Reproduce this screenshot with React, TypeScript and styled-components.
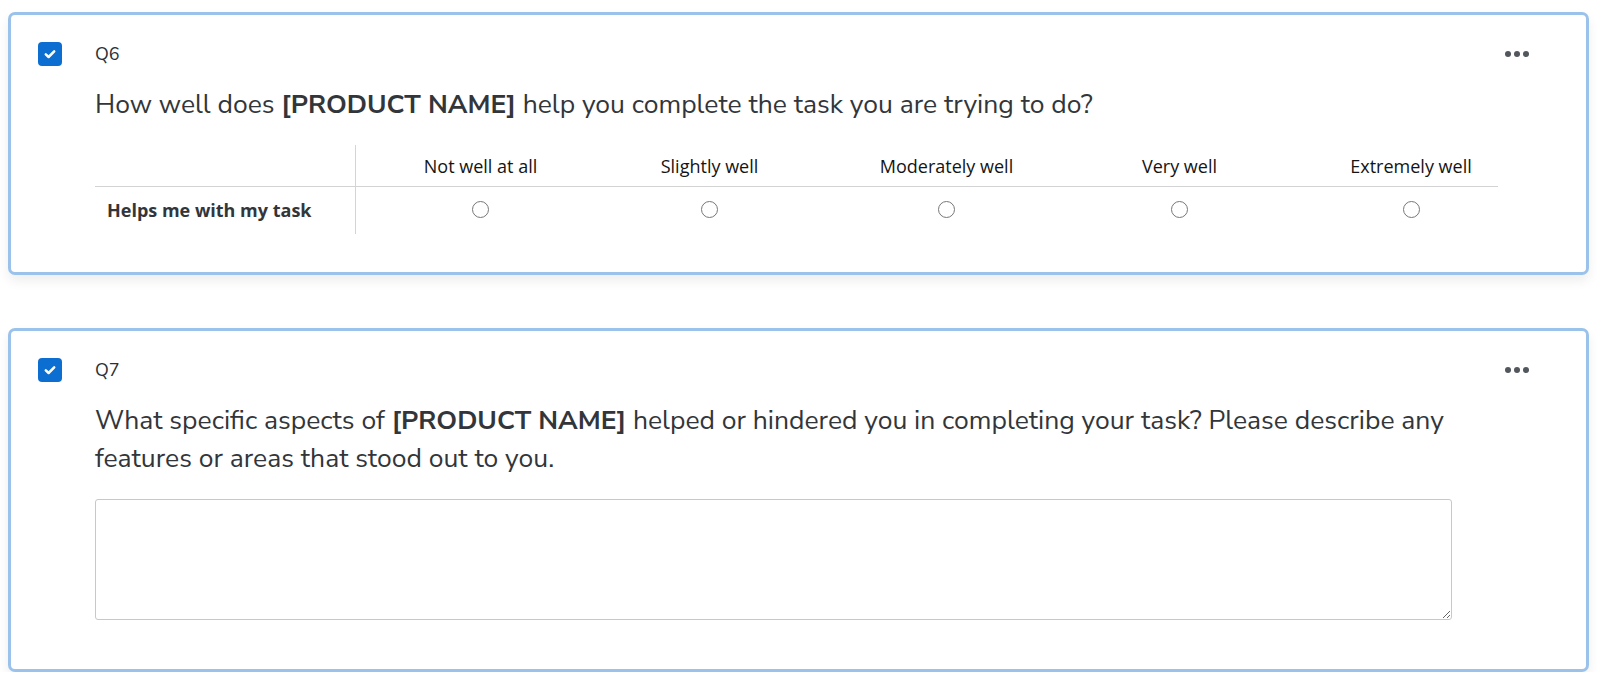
import styled, { createGlobalStyle } from 'styled-components'

const GlobalStyle = createGlobalStyle`
    html, body {
        margin: 0;
        padding: 0;
        background: #ffffff;
    }
    body {
        font-family: "Lato", "Open Sans", sans-serif;
        color: #32363a;
    }
`

const Page = styled.div`
    display: flex;
    flex-direction: column;
    gap: 53px;
    padding: 12px 8px 0 8px;
`

const Card = styled.section`
    border: 3px solid #9bc2ea;
    border-radius: 7px;
    background: #fff;
    box-shadow: 0 6px 12px rgba(0, 0, 0, 0.07);
    padding: 27px 56px 38px 27px;
    display: grid;
    grid-template-columns: 57px 1fr 26px;
`

const CheckBox = styled.div`
    width: 24px;
    height: 24px;
    border-radius: 4px;
    background: #0b6ed0;
    display: flex;
    align-items: center;
    justify-content: center;
`

const Body = styled.div`
    display: flex;
    flex-direction: column;
`

const QLabel = styled.div`
    font-family: "Nunito Sans", "Lato", sans-serif;
    font-size: 18px;
    line-height: 24px;
    color: #2c3034;
`

const QText = styled.p`
    font-family: "Nunito Sans", "Lato", sans-serif;
    font-size: 26.5px;
    line-height: 38px;
    margin: 19px 0 0;
    max-width: 1380px;
    color: #32363a;
    b {
        font-weight: 700;
    }
`

const Matrix = styled.div`
    display: grid;
    grid-template-columns: 261px 249px 209px 265px 201px 218px;
    width: 1403px;
    margin-top: 22px;
    font-family: "Open Sans", sans-serif;
    font-size: 18px;
`

const HeadCell = styled.div<{ $first?: boolean; $shift?: number }>`
    height: 42px;
    display: flex;
    align-items: center;
    justify-content: center;
    padding-left: ${p => p.$shift ?? 0}px;
    box-sizing: border-box;
    border-bottom: 1px solid #d3d3d3;
    border-right: ${p => (p.$first ? '1px solid #d5d5d5' : 'none')};
    color: #141414;
    white-space: nowrap;
`

const RowLabel = styled.div`
    height: 47px;
    display: flex;
    align-items: center;
    padding-left: 12px;
    padding-bottom: 2px;
    box-sizing: border-box;
    font-weight: 700;
    color: #32363a;
    border-right: 1px solid #d5d5d5;
    white-space: nowrap;
`

const RadioCell = styled.div<{ $shift?: number }>`
    height: 47px;
    display: flex;
    align-items: center;
    justify-content: center;
    padding-bottom: 3px;
    padding-left: ${p => p.$shift ?? 0}px;
    box-sizing: border-box;
`

const Radio = styled.span`
    width: 15px;
    height: 15px;
    border: 1.5px solid #777;
    border-radius: 50%;
    background: #fff;
`

const Menu = styled.button`
    border: none;
    background: none;
    padding: 0;
    width: 26px;
    height: 24px;
    display: flex;
    align-items: center;
    justify-content: center;
    gap: 3px;
    align-self: start;
    span {
        width: 6px;
        height: 6px;
        border-radius: 50%;
        background: #52575d;
    }
`

const TextBox = styled.textarea`
    margin: 22px 0 11px;
    width: 1357px;
    height: 121px;
    box-sizing: border-box;
    border: 1px solid #c8c8c8;
    border-radius: 3px;
    resize: vertical;
    font-family: "Open Sans", sans-serif;
    font-size: 16px;
`

function Check() {
    return (
        <CheckBox>
            <svg width="14" height="14" viewBox="0 0 14 14">
                <path d="M2.8 7.3 L5.6 10 L11.2 4.3" fill="none" stroke="#fff" strokeWidth="2.5" strokeLinecap="round" strokeLinejoin="round" />
            </svg>
        </CheckBox>
    )
}

function Dots() {
    return (
        <Menu aria-label="More">
            <span />
            <span />
            <span />
        </Menu>
    )
}

const scale = ['Not well at all', 'Slightly well', 'Moderately well', 'Very well', 'Extremely well']

export default function App() {
    return (
        <Page>
            <GlobalStyle />
            <Card>
                <Check />
                <Body>
                    <QLabel>Q6</QLabel>
                    <QText>
                        How well does <b>[PRODUCT NAME]</b> help you complete the task you are trying to do?
                    </QText>
                    <Matrix>
                        <HeadCell $first />
                        {scale.map((s, i) => (
                            <HeadCell key={s} $shift={i === scale.length - 1 ? 44 : 0}>{s}</HeadCell>
                        ))}
                        <RowLabel>Helps me with my task</RowLabel>
                        {scale.map((s, i) => (
                            <RadioCell key={s} $shift={i === scale.length - 1 ? 44 : 0}>
                                <Radio />
                            </RadioCell>
                        ))}
                    </Matrix>
                </Body>
                <Dots />
            </Card>
            <Card>
                <Check />
                <Body>
                    <QLabel>Q7</QLabel>
                    <QText>
                        What specific aspects of <b>[PRODUCT NAME]</b> helped or hindered you in completing your task? Please describe any features or areas that stood out to you.
                    </QText>
                    <TextBox />
                </Body>
                <Dots />
            </Card>
        </Page>
    )
}
